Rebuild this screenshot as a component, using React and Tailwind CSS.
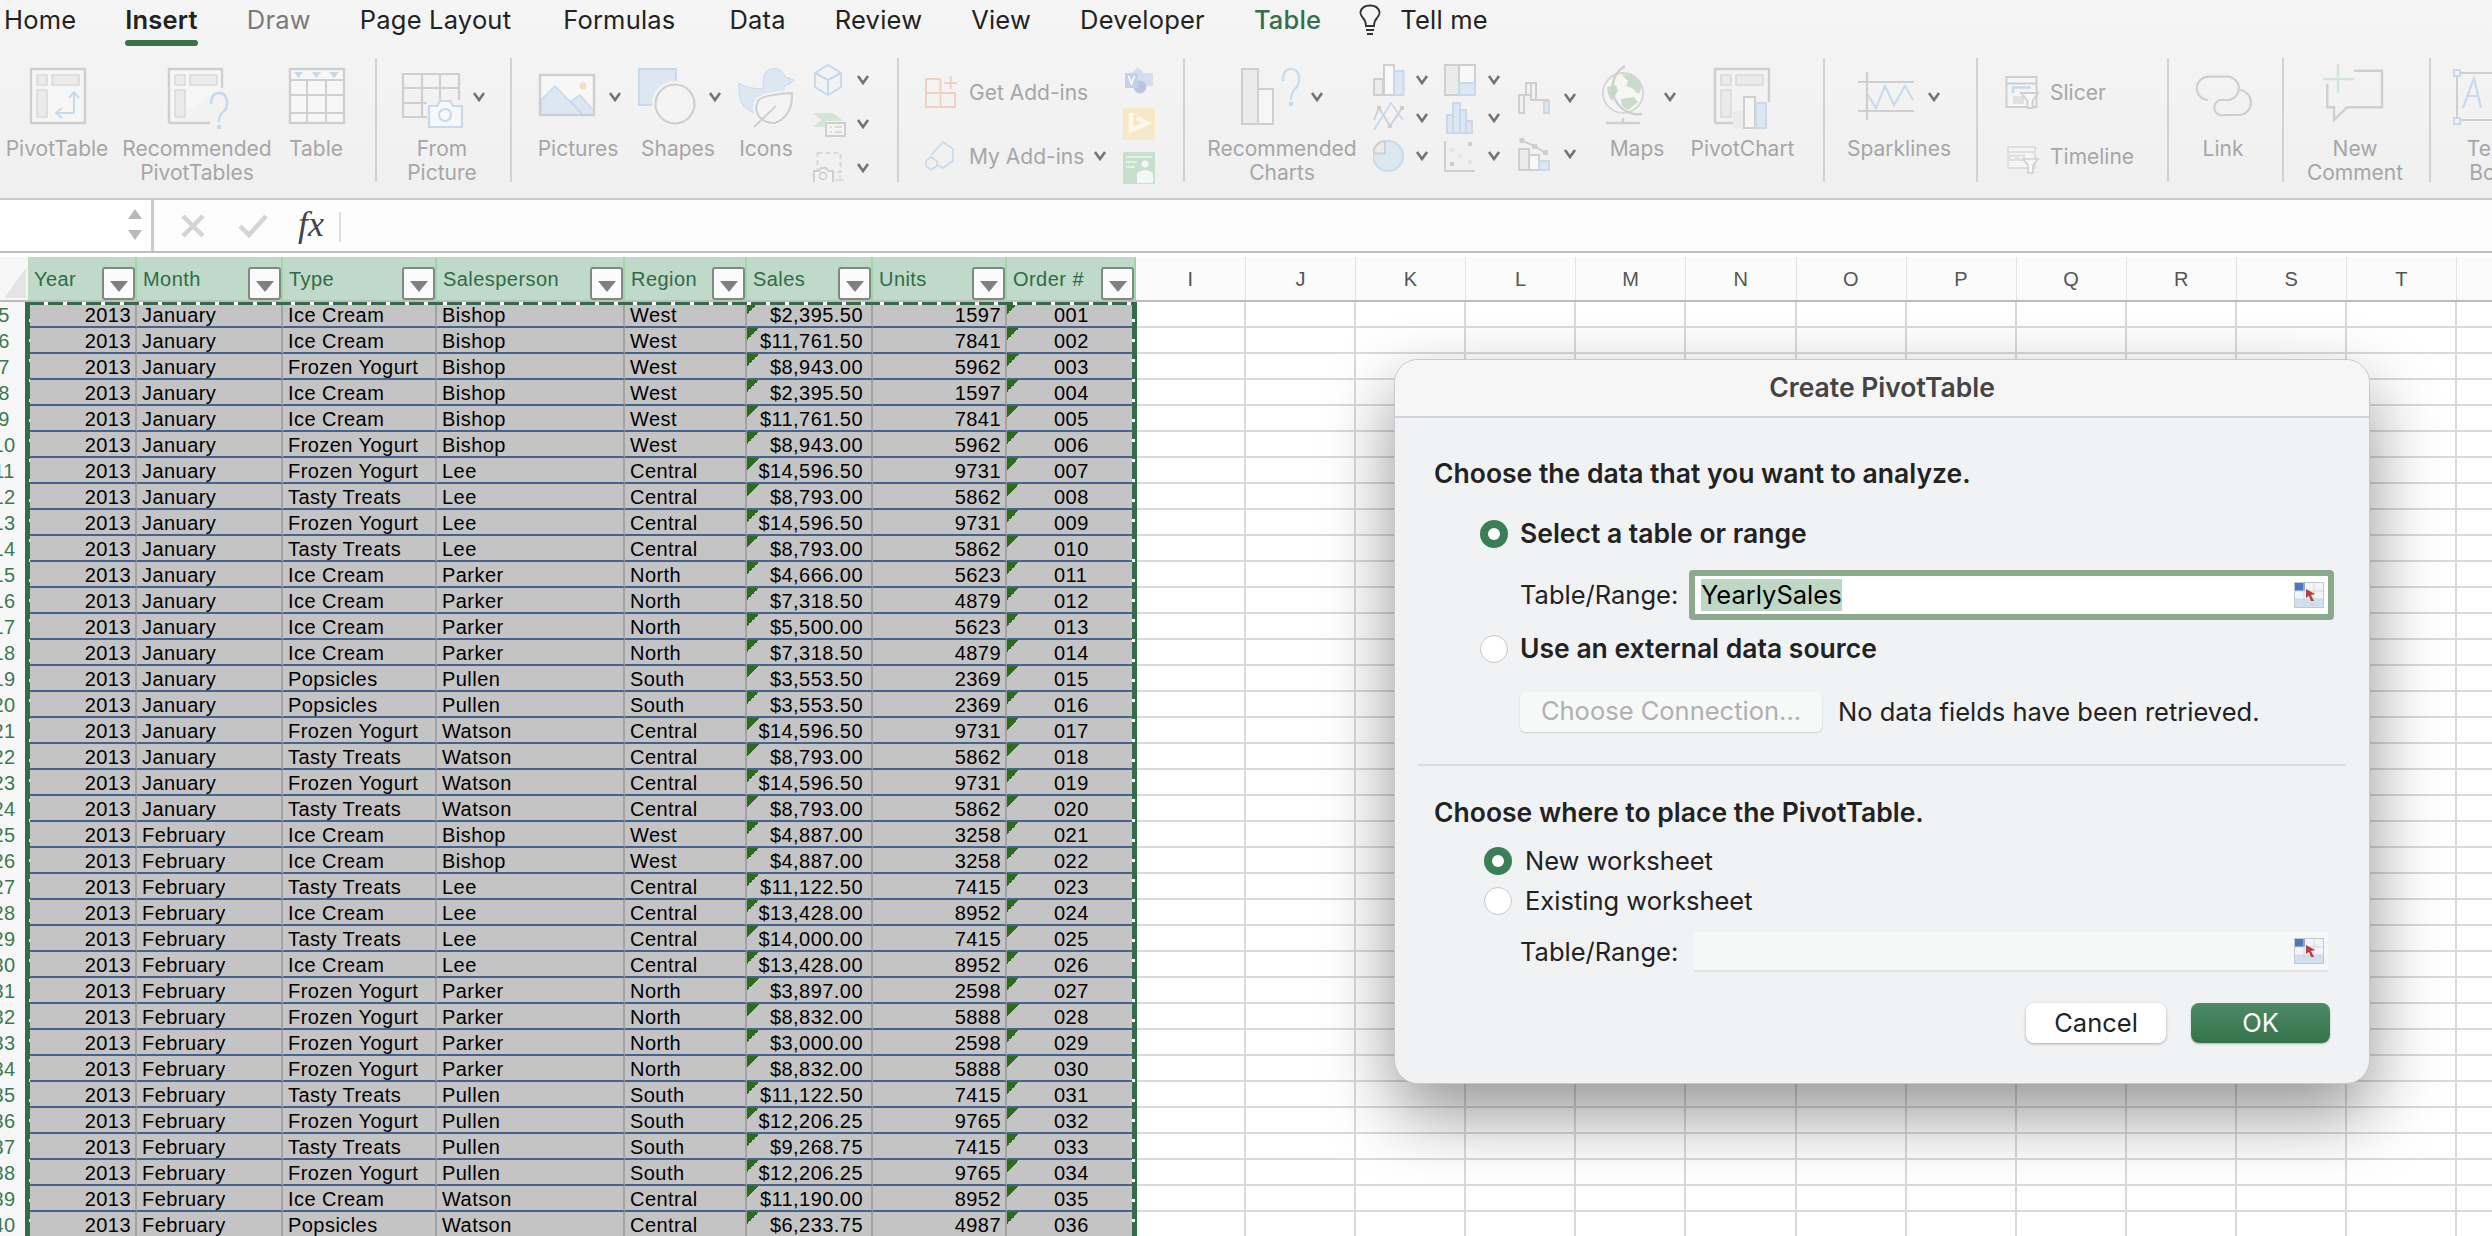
const S = '#cfcfcf';
const F = '#ebebeb';
const B = '#c8d9ec';
const BF = '#dde7f2';
const G = '#d3e6d5';

const COLS = [
  { name: 'Year', w: 'w-[109px]', cell: 'w-[112px] pr-[4px] text-right' },
  { name: 'Month', w: 'w-[146px]', cell: 'w-[146px] pl-[5px]' },
  { name: 'Type', w: 'w-[154px]', cell: 'w-[154px] pl-[5px]' },
  { name: 'Salesperson', w: 'w-[188px]', cell: 'w-[188px] pl-[5px]' },
  { name: 'Region', w: 'w-[122px]', cell: 'w-[122px] pl-[5px]' },
  { name: 'Sales', w: 'w-[126px]', cell: 'w-[126px] pr-[8px] text-right relative' },
  { name: 'Units', w: 'w-[134px]', cell: 'w-[134px] pr-[4px] text-right' },
  { name: 'Order #', w: 'w-[129px]', cell: 'w-[129px] pl-[47px] relative' },
];

// the last column starts at the window edge, its letter is out of sight
const LETTERS = ['I', 'J', 'K', 'L', 'M', 'N', 'O', 'P', 'Q', 'R', 'S', 'T', ''];

const FY = 'Frozen Yogurt';
const TT = 'Tasty Treats';
const IC = 'Ice Cream';
const PS = 'Popsicles';

const ROWS = [
  ['January', IC, 'Bishop', 'West', '$2,395.50', 1597],
  ['January', IC, 'Bishop', 'West', '$11,761.50', 7841],
  ['January', FY, 'Bishop', 'West', '$8,943.00', 5962],
  ['January', IC, 'Bishop', 'West', '$2,395.50', 1597],
  ['January', IC, 'Bishop', 'West', '$11,761.50', 7841],
  ['January', FY, 'Bishop', 'West', '$8,943.00', 5962],
  ['January', FY, 'Lee', 'Central', '$14,596.50', 9731],
  ['January', TT, 'Lee', 'Central', '$8,793.00', 5862],
  ['January', FY, 'Lee', 'Central', '$14,596.50', 9731],
  ['January', TT, 'Lee', 'Central', '$8,793.00', 5862],
  ['January', IC, 'Parker', 'North', '$4,666.00', 5623],
  ['January', IC, 'Parker', 'North', '$7,318.50', 4879],
  ['January', IC, 'Parker', 'North', '$5,500.00', 5623],
  ['January', IC, 'Parker', 'North', '$7,318.50', 4879],
  ['January', PS, 'Pullen', 'South', '$3,553.50', 2369],
  ['January', PS, 'Pullen', 'South', '$3,553.50', 2369],
  ['January', FY, 'Watson', 'Central', '$14,596.50', 9731],
  ['January', TT, 'Watson', 'Central', '$8,793.00', 5862],
  ['January', FY, 'Watson', 'Central', '$14,596.50', 9731],
  ['January', TT, 'Watson', 'Central', '$8,793.00', 5862],
  ['February', IC, 'Bishop', 'West', '$4,887.00', 3258],
  ['February', IC, 'Bishop', 'West', '$4,887.00', 3258],
  ['February', TT, 'Lee', 'Central', '$11,122.50', 7415],
  ['February', IC, 'Lee', 'Central', '$13,428.00', 8952],
  ['February', TT, 'Lee', 'Central', '$14,000.00', 7415],
  ['February', IC, 'Lee', 'Central', '$13,428.00', 8952],
  ['February', FY, 'Parker', 'North', '$3,897.00', 2598],
  ['February', FY, 'Parker', 'North', '$8,832.00', 5888],
  ['February', FY, 'Parker', 'North', '$3,000.00', 2598],
  ['February', FY, 'Parker', 'North', '$8,832.00', 5888],
  ['February', TT, 'Pullen', 'South', '$11,122.50', 7415],
  ['February', FY, 'Pullen', 'South', '$12,206.25', 9765],
  ['February', TT, 'Pullen', 'South', '$9,268.75', 7415],
  ['February', FY, 'Pullen', 'South', '$12,206.25', 9765],
  ['February', IC, 'Watson', 'Central', '$11,190.00', 8952],
  ['February', PS, 'Watson', 'Central', '$6,233.75', 4987],
];

function Chev({ x, y }) {
  return <path d={`M${x - 5} ${y - 4}L${x} ${y + 3}L${x + 5} ${y - 4}`} fill="none" stroke="#747474" strokeWidth="2.6" />;
}

function Big({ w, ml, label, second, children }) {
  return (
    <div className={`flex flex-col items-center shrink-0 ${w} ${ml || ''}`}>
      <svg className="w-full h-[79px] overflow-visible">{children}</svg>
      <div className="whitespace-nowrap leading-[24px] text-[21px] text-center text-[#a6a6a6] font-['Inter',sans-serif]">
        <div>{label}</div>
        {second && <div>{second}</div>}
      </div>
    </div>
  );
}

function Sep() {
  return <div className="w-[2px] h-[124px] shrink-0 bg-[#d2d2d2]" />;
}

function PivotRects({ dx }) {
  return (
    <g fill={F} stroke="#d9d9d9" strokeWidth="1.5">
      <rect x={dx + 7} y="17" width="10" height="10" />
      <rect x={dx + 22} y="17" width="27" height="10" />
      <rect x={dx + 7} y="32" width="10" height="27" />
    </g>
  );
}

function SmallLabel({ children }) {
  return <span className="text-[21px] text-[#a6a6a6] whitespace-nowrap font-['Inter',sans-serif]">{children}</span>;
}

function ChartIcons() {
  return (
    <svg className="w-[225px] h-[124px] shrink-0">
      <rect x="1" y="21" width="9" height="16" fill={F} stroke={S} strokeWidth="2" />
      <rect x="11" y="7" width="10" height="30" fill="#f8f8f8" stroke={S} strokeWidth="2" />
      <rect x="21" y="13" width="9.500" height="24" fill={BF} stroke={B} strokeWidth="2" />
      <Chev x={49} y={22} />
      <path d="M1 62L6 50L17 68L29 50" fill="none" stroke={S} strokeWidth="1.800" />
      <path d="M1 72L18 45L30 62" fill="none" stroke={B} strokeWidth="1.800" />
      <g fill={S}>
        <rect x="4" y="48" width="4" height="4" />
        <rect x="15" y="66" width="4" height="4" />
        <rect x="27" y="48" width="4" height="4" />
      </g>
      <Chev x={49} y={60} />
      <circle cx="15" cy="98" r="15" fill={BF} stroke={B} strokeWidth="2" />
      <path d="M12 95.500V83A13 13 0 0 0 0 95.500Z" fill={F} stroke={S} strokeWidth="2" />
      <Chev x={49} y={98} />
      <rect x="72" y="7" width="30" height="30" fill="#f8f8f8" stroke={S} strokeWidth="2" />
      <rect x="73" y="8" width="13" height="28" fill={F} />
      <path d="M86 7V37" stroke={S} strokeWidth="2" />
      <rect x="86" y="25" width="16" height="12" fill={BF} stroke={B} strokeWidth="2" />
      <Chev x={121} y={22} />
      <path d="M74 75V57H80V75ZM80 75V45H87V75ZM87 75V52H93V75ZM93 75V63H99V75Z" fill={BF} stroke={B} strokeWidth="2" />
      <Chev x={121} y={60} />
      <path d="M72 83V113H102" fill="none" stroke={S} strokeWidth="2" />
      <g fill={BF}>
        <rect x="77" y="90" width="4" height="4" />
        <rect x="85" y="96" width="4" height="4" />
        <rect x="95" y="102" width="4" height="4" />
      </g>
      <rect x="77" y="104" width="4" height="4" fill="#cdcdcd" />
      <rect x="95" y="84" width="4" height="4" fill="#cdcdcd" />
      <Chev x={121} y={98} />
      <path d="M146 37H151V55H146ZM153 37V25H158V37ZM158 25H163V42H158V37H153M153 37H146" fill="none" stroke={S} strokeWidth="2" />
      <path d="M171 43H176V55H171Z" fill={BF} stroke={B} strokeWidth="2" />
      <path d="M163 42H176" stroke={S} strokeWidth="2" />
      <Chev x={197} y={40} />
      <rect x="146" y="91" width="10" height="21" fill={F} stroke={S} strokeWidth="2" />
      <rect x="156" y="97" width="10" height="15" fill="#f8f8f8" stroke={S} strokeWidth="2" />
      <rect x="166" y="103" width="10" height="9" fill={BF} stroke={B} strokeWidth="2" />
      <path d="M149 83L162 88L172 95" fill="none" stroke={S} strokeWidth="2" />
      <g fill={S}>
        <rect x="146.500" y="80" width="5" height="5" />
        <rect x="159" y="86" width="5" height="5" />
        <rect x="170" y="92" width="5" height="5" />
      </g>
      <Chev x={197} y={96} />
    </svg>
  );
}

function Ribbon() {
  return (
    <div className="flex h-[140px] items-start overflow-hidden">
      <div className="w-[375px] shrink-0 flex">
        <Big w="w-[114px]" label="PivotTable">
          <rect x="31" y="11" width="54" height="54" fill="#f6f6f6" stroke={S} strokeWidth="2.4" />
          <PivotRects dx={30} />
          <path d="M74 35V55H57M69 40L74 34L79 40M62 50L56 55L62 60" fill="none" stroke={B} strokeWidth="2" />
        </Big>
        <Big w="w-[166px]" label="Recommended" second="PivotTables">
          <path d="M55 65V11H108V30M55 65H96" fill="#f6f6f6" stroke={S} strokeWidth="2.4" />
          <PivotRects dx={54} />
          <path d="M97 46q0-11 8-11q8 0 8 10q0 7-5 10q-3 3-3 9" fill="none" stroke={B} strokeWidth="2.4" />
          <rect x="103" y="67" width="4" height="4" fill={B} />
        </Big>
        <Big w="w-[72px]" label="Table">
          <rect x="10" y="11" width="54" height="54" fill="#f7f7f7" stroke={S} strokeWidth="2.4" />
          <path d="M10 22H64M10 37H64M10 55H64M27 22V65M46 22V65" stroke={S} strokeWidth="2" />
          <path d="M14 14H23L18.500 20ZM32 14H41L36.500 20ZM49 14H59L54 20Z" fill={B} />
        </Big>
      </div>
      <Sep />
      <div className="w-[133px] shrink-0 flex">
        <Big w="w-[130px]" label="From" second="Picture">
          <path d="M50 59H26V16H82V42M26 30H82M45 16V59M63 16V42M26 45H50" fill="none" stroke={S} strokeWidth="2.2" />
          <path d="M52 48H60L63 43H73L76 48H85V69H52Z" fill="#f7f8fa" stroke={B} strokeWidth="2.2" />
          <circle cx="68" cy="57" r="6" fill="none" stroke={B} strokeWidth="2.2" />
          <Chev x={102} y={39} />
        </Big>
      </div>
      <Sep />
      <div className="w-[385px] shrink-0 flex">
        <Big w="w-[80px]" ml="ml-[26px]" label="Pictures">
          <rect x="2" y="17" width="54" height="40" fill="#f7f7f7" />
          <path d="M3 42L17 28L45 57H3ZM33 43L42 37L56 53V57H45Z" fill={BF} stroke={B} strokeWidth="1.500" />
          <rect x="2" y="17" width="54" height="40" fill="none" stroke={S} strokeWidth="2.4" />
          <circle cx="45" cy="28" r="3.500" fill="#f6dcc0" />
          <Chev x={77} y={39} />
        </Big>
        <Big w="w-[120px]" label="Shapes">
          <rect x="21" y="11" width="37" height="36" fill={BF} stroke={B} strokeWidth="2" />
          <circle cx="57" cy="46" r="23" fill="#f4f4f4" />
          <circle cx="57" cy="46" r="19.500" fill="#f4f4f4" stroke={S} strokeWidth="2.2" />
          <Chev x={97} y={39} />
        </Big>
        <Big w="w-[56px]" label="Icons">
          <path d="M1 25Q10 31 25 31Q26 27 25 22Q26 11 36 10.500Q45 11 47 19L56 22Q53 27 46 28L46 34L20 56Q2 52 1 35Z" fill={BF} stroke={B} strokeWidth="1" />
          <path d="M20 43Q23 37 54 35Q55 58 37 65Q20 65 18 50Z" fill="#f4f4f4" stroke="#f4f4f4" strokeWidth="6" />
          <path d="M20 43Q23 37 54 35Q55 58 37 65Q20 65 18 50Z" fill="#f4f4f4" stroke={S} strokeWidth="2" />
          <path d="M16 69L38 48" fill="none" stroke={S} strokeWidth="2" />
        </Big>
        <svg className="w-[80px] h-[124px] shrink-0">
          <path d="M34 7L47 15V29L34 37L21 29V15ZM21 15L34 22L47 15M34 22V37" fill="none" stroke={B} strokeWidth="2" />
          <Chev x={69} y={22} />
          <path d="M19 55H39L49 63H32V69H19L27 62Z" fill={G} />
          <rect x="32" y="65" width="19" height="13" fill="#f4f4f4" stroke={S} strokeWidth="2" />
          <path d="M36 69H38M41 69H48M36 74H38M41 74H48" stroke={S} strokeWidth="1.500" />
          <Chev x={69} y={66} />
          <rect x="23.500" y="95" width="23" height="19" fill="none" stroke="#d8d8d8" strokeWidth="2" strokeDasharray="5 3" />
          <path d="M20 113H25L27 110H32L34 113H39V125H20Z" fill="#f4f4f4" stroke={S} strokeWidth="2" />
          <circle cx="29" cy="118" r="3.500" fill="none" stroke={S} strokeWidth="1.800" />
          <path d="M46 117V126M41 122H50" stroke={G} strokeWidth="2" />
          <Chev x={69} y={110} />
        </svg>
      </div>
      <Sep />
      <div className="w-[284px] shrink-0 flex">
        <div className="w-[224px] shrink-0 pl-[26px]">
          <div className="h-[70px] flex items-center">
            <svg className="w-[44px] h-[34px] shrink-0">
              <path d="M15.500 3H1V31H30V17H1M15.500 3V31" fill="none" stroke="#f1cfc2" strokeWidth="2" />
              <path d="M19 7H32M25.700 0V13" stroke="#f1cfc2" strokeWidth="2" />
            </svg>
            <SmallLabel>Get Add-ins</SmallLabel>
          </div>
          <div className="h-[58px] flex items-center">
            <svg className="w-[44px] h-[32px] shrink-0">
              <path d="M6 14L18 1L28 8V20L18 27L12 24" fill="none" stroke={B} strokeWidth="1.600" />
              <path d="M6 16L12 20V25L6 29L1 25V20Z" fill="none" stroke={B} strokeWidth="1.600" />
            </svg>
            <SmallLabel>My Add-ins</SmallLabel>
            <svg className="w-[26px] h-[14px] shrink-0 ml-[4px]"><Chev x={12} y={6} /></svg>
          </div>
        </div>
        <svg className="w-[34px] h-[128px] shrink-0">
          <path d="M9 15L15 9L21 15H30V28H2V15Z" fill="#d5deef" />
          <circle cx="17" cy="29" r="6.500" fill="#bcc5e0" />
          <rect x="2" y="15" width="13" height="15" fill="#c5d0ea" />
          <path d="M5.500 18L8.500 26L11.500 18" fill="none" stroke="#fff" strokeWidth="1.600" />
          <rect x="0" y="50" width="32" height="32" fill="#f7e8c7" />
          <path d="M8 55V72L24 65L14 60" fill="none" stroke="#fdf8ec" strokeWidth="4.500" />
          <rect x="0" y="94" width="32" height="32" fill="#c7dfcf" />
          <path d="M3 99H29M3 104H14M3 109H12" stroke="#e4f0e7" strokeWidth="2" />
          <circle cx="22" cy="106" r="3.500" fill="#f4f8f5" />
          <path d="M14 125V115Q22 109 30 115V125Z" fill="#f4f8f5" />
        </svg>
      </div>
      <Sep />
      <div className="w-[638px] shrink-0 flex">
        <Big w="w-[182px]" ml="ml-[6px]" label="Recommended" second="Charts">
          <rect x="51" y="11" width="16" height="55" fill={F} stroke={S} strokeWidth="2" />
          <rect x="67" y="31" width="15" height="35" fill="#f6f6f6" stroke={S} strokeWidth="2" />
          <path d="M92 23q0-12 8-12q8 0 8 10q0 7-5 11q-3 3-3 10" fill="none" stroke={B} strokeWidth="2.2" />
          <rect x="98" y="44" width="4" height="4" fill={B} />
          <Chev x={126} y={39} />
        </Big>
        <ChartIcons />
        <Big w="w-[78px]" label="Maps">
          <circle cx="25" cy="35" r="20" fill="#f5f7f5" stroke="#d6d6d6" strokeWidth="2" />
          <path d="M24 17Q34 14 42 24Q45 32 40 36L34 30L28 28L30 23ZM9 29L18 27L20 33L14 43Q9 38 9 29ZM23 41L36 39L40 44L30 52L24 48Z" fill="#c9dccb" />
          <path d="M27 8A26 26 0 0 0 44 56" fill="none" stroke={S} strokeWidth="2.400" />
          <path d="M25 60V65M8 65H42" stroke={S} strokeWidth="2.400" />
          <Chev x={72} y={39} />
        </Big>
        <Big w="w-[133px]" label="PivotChart">
          <path d="M39 65V11H93V44M39 65H57" fill="none" stroke={S} strokeWidth="2.4" />
          <PivotRects dx={38} />
          <rect x="57" y="53" width="11" height="17" fill={F} />
          <rect x="68" y="39" width="11" height="31" fill="#f6f6f6" stroke={S} strokeWidth="2" />
          <rect x="80" y="45" width="10" height="25" fill={BF} stroke={B} strokeWidth="2" />
        </Big>
      </div>
      <Sep />
      <div className="w-[151px] shrink-0 flex">
        <Big w="w-[148px]" label="Sparklines">
          <path d="M33 24H89M33 53H89M42 14V62" fill="none" stroke={S} strokeWidth="2.2" />
          <path d="M43 37L51 50L60 28L69 47L80 28L88 42" fill="none" stroke={B} strokeWidth="2" />
          <Chev x={109} y={39} />
        </Big>
      </div>
      <Sep />
      <div className="w-[189px] shrink-0 pl-[27px]">
        <div className="h-[70px] flex items-center">
          <svg className="w-[45px] h-[34px] shrink-0">
            <rect x="1.500" y="1" width="30" height="30" fill="#f5f5f5" stroke={S} strokeWidth="2" />
            <path d="M1.500 7.500H31.500" stroke={S} strokeWidth="2" />
            <path d="M8 17V11.500H26" fill="none" stroke={B} strokeWidth="2.500" />
            <rect x="8" y="20" width="11" height="8" fill="#e2e2e2" />
            <path d="M16 17H33L27.500 25V32H22.500V25Z" fill="#f7f7f7" stroke={S} strokeWidth="1.800" />
          </svg>
          <SmallLabel>Slicer</SmallLabel>
        </div>
        <div className="h-[58px] flex items-center">
          <svg className="w-[45px] h-[34px] shrink-0 ml-[2px] -mr-[2px]">
            <rect x="1" y="7" width="27" height="21" fill="#f5f5f5" stroke="#dadada" strokeWidth="1.600" />
            <path d="M1 12H28" stroke="#dadada" strokeWidth="1.600" />
            <path d="M3 15.500H9V20H3ZM11 15.500H17V20H11Z" fill="none" stroke="#dadada" strokeWidth="1.400" />
            <path d="M16 19H31L26 25V33H21V25Z" fill="#f7f7f7" stroke={S} strokeWidth="1.600" />
          </svg>
          <SmallLabel>Timeline</SmallLabel>
        </div>
      </div>
      <Sep />
      <div className="w-[113px] shrink-0 flex">
        <Big w="w-[108px]" label="Link">
          <g transform="translate(-181 2) scale(0.3333)">
            <path d="M660 120A35 35 0 0 1 663 50H715A35 35 0 0 1 720 120H695A22 22 0 0 0 710 165H757A38 38 0 0 0 757 90" fill="none" stroke={S} strokeWidth="6.500" />
          </g>
        </Big>
      </div>
      <Sep />
      <div className="w-[145px] shrink-0 flex">
        <Big w="w-[142px]" label="New" second="Comment">
          <path d="M70 12.700H98V49.300H63L50 62V49.300H43.300V26" fill="none" stroke={S} strokeWidth="2.4" />
          <path d="M54 6V35M39 21H70" stroke={G} strokeWidth="2.4" />
        </Big>
      </div>
      <Sep />
      <div className="w-[114px] shrink-0 flex">
        <Big w="w-[114px]" label="Text" second="Box">
          <path d="M26 15H110M26 15V62H110" fill="none" stroke={S} strokeWidth="2" />
          <rect x="23" y="12" width="6" height="6" fill="#f4f4f4" stroke={B} strokeWidth="2" />
          <rect x="23" y="60" width="6" height="6" fill="#f4f4f4" stroke={B} strokeWidth="2" />
          <path d="M32 50L43 20L50 50M36 38H47" fill="none" stroke={B} strokeWidth="2.2" />
        </Big>
      </div>
    </div>
  );
}

function Tabs() {
  const tab = "leading-[40px] text-[25.5px] whitespace-nowrap";
  return (
    <div className="flex h-[58px] pl-[4px] gap-[49px] font-['Inter',sans-serif] text-[#222222] tracking-[0.2px]">
      <div className={tab}>Home</div>
      <div className="flex flex-col">
        <div className={`${tab} font-semibold`}>Insert</div>
        <div className="h-[6px] rounded-[3px] bg-[#3a7148]" />
      </div>
      <div className={`${tab} text-[#7a7a7a]`}>Draw</div>
      <div className={tab}>Page Layout</div>
      <div className={`${tab} ml-[3px]`}>Formulas</div>
      <div className={`${tab} ml-[5px]`}>Data</div>
      <div className={tab}>Review</div>
      <div className={tab}>View</div>
      <div className={tab}>Developer</div>
      <div className={`${tab} text-[#33704a] font-medium`}>Table</div>
      <div className="flex items-center h-[40px] -ml-[12px] gap-[18px]">
        <svg width="24" height="32" viewBox="0 0 24 32" fill="none" stroke="#333" strokeWidth="1.8">
          <path d="M8 22Q8 17 5 14Q2 10 2.500 8Q4 1.500 12 1.500Q20 1.500 21.500 8Q22 10 19 14Q16 17 16 22Z" />
          <path d="M8 26H16M9 30H15" />
        </svg>
        <div className={tab}>Tell me</div>
      </div>
    </div>
  );
}

function FormulaBar() {
  return (
    <div className="flex h-[53px] bg-[#fdfdfd] border-b-2 border-[#bfbfbf]">
      <div className="w-[151px] h-[50px] bg-white flex items-center justify-end pr-[8px] shrink-0">
        <svg width="16" height="34" viewBox="0 0 16 34" fill="#b9b9b9">
          <path d="M8 1L15 11H1ZM1 22H15L8 32Z" />
        </svg>
      </div>
      <div className="w-[3px] bg-[#cccccc] shrink-0" />
      <div className="flex items-center pl-[27px] gap-[33px]">
        <svg width="24" height="24" viewBox="0 0 24 24" stroke="#d4d4d4" strokeWidth="4.500" fill="none">
          <path d="M2 2L22 22M22 2L2 22" />
        </svg>
        <svg width="30" height="24" viewBox="0 0 30 24" stroke="#d4d4d4" strokeWidth="4.500" fill="none">
          <path d="M2 12L11 21L28 2" />
        </svg>
        <span className="text-[36px] leading-none italic text-[#444444] font-['Liberation_Serif',serif] -ml-[3px] -mt-[3px]">fx</span>
      </div>
      <div className="w-[2px] h-[30px] mt-[12px] ml-[15px] bg-[#dddddd]" />
    </div>
  );
}

function FilterBtn() {
  return (
    <div className="w-[33px] h-[33px] shrink-0 rounded-[3px] border-2 border-[#7f8a83] bg-[#fbfbfb] flex items-center justify-center">
      <svg width="18" height="12" viewBox="0 0 18 12" className="mt-[4px]"><path d="M0 1H18L9 12Z" fill="#808080" /></svg>
    </div>
  );
}

function HeaderRow() {
  return (
    <div className="flex h-[49px] pt-[4px] border-b-2 border-[#bcbcbc]">
      <div className="w-[28px] shrink-0 bg-[#f7f7f7] flex items-end justify-end pr-[2px] pb-[2px]">
        <svg width="22" height="30"><path d="M22 0V30H0Z" fill="#e4e4e4" /></svg>
      </div>
      {COLS.map(c => (
        <div key={c.name} className={`${c.w} shrink-0 bg-[#bfdac8] border-r-2 border-[#9fd6a9] flex items-end justify-between pl-[6px]`}>
          <span className="self-center text-[#2f6b47] whitespace-nowrap">{c.name}</span>
          <FilterBtn />
        </div>
      ))}
      {LETTERS.map((l, i) => (
        <div key={i} className="w-[110.100px] shrink-0 bg-[#fbfbfb] border-r border-[#e4e4e4] text-center text-[#555555] leading-[44px]">{l}</div>
      ))}
    </div>
  );
}

function Triangle() {
  return <div className="absolute left-0 top-0 w-[12px] h-[12px] bg-[linear-gradient(135deg,#2c6a1c_50%,transparent_50%)]" />;
}

function DataRow({ n, row }) {
  const order = String(n - 4).padStart(3, '0');
  const values = [2013, row[0], row[1], row[2], row[3], row[4], row[5], order];
  return (
    <div className="flex h-[26px] leading-[26px]">
      <div className="w-[25px] shrink-0 overflow-hidden bg-[#f7f7f7] text-[#3a7a50]">
        <div className="w-[40px] -ml-[16px] text-center">{n}</div>
      </div>
      {COLS.map((c, i) => (
        <div key={c.name} className={`${c.cell} shrink-0 bg-[#c4c4c4] border-r-2 border-b-2 border-r-[#a2a2a2] border-b-[#46638f] whitespace-nowrap text-black`}>
          {(i === 5 || i === 7) && <Triangle />}
          {values[i]}
        </div>
      ))}
      {LETTERS.map((l, i) => (
        <div key={i} className="w-[110.100px] shrink-0 bg-white border-r-2 border-b-2 border-[#dadada]" />
      ))}
    </div>
  );
}

function Sheet() {
  return (
    <div className="relative font-['Liberation_Sans',sans-serif] text-[20px] tracking-[0.45px]">
      <HeaderRow />
      {ROWS.map((row, i) => <DataRow key={i} n={i + 5} row={row} />)}
      {/* marching ants round the copied range */}
      <div className="absolute left-[25px] top-[49px] bottom-0 w-[5px] bg-[#356b4a] bg-[repeating-linear-gradient(180deg,#356b4a_0_17px,#ffffff_17px_20px)] bg-[length:1.500px_100%] bg-right bg-no-repeat" />
      <div className="absolute left-[29px] top-[49px] w-[1106px] h-[3px] bg-[repeating-linear-gradient(90deg,#356b4a_0_15px,#ffffff_15px_19px)]" />
      <div className="absolute left-[1132px] top-[49px] bottom-0 w-[5px] bg-[#356b4a] bg-[repeating-linear-gradient(180deg,#356b4a_0_17px,#ffffff_17px_20px)] bg-[length:3px_100%] bg-left bg-no-repeat" />
    </div>
  );
}

function RadioDot({ on }) {
  return on ? (
    <div className="w-[28px] h-[28px] shrink-0 rounded-full bg-[#3b7f57] flex items-center justify-center">
      <div className="w-[12px] h-[12px] rounded-full bg-white" />
    </div>
  ) : (
    <div className="w-[28px] h-[28px] shrink-0 rounded-full bg-white border border-[#c8c8c8]" />
  );
}

function RangePicker() {
  return (
    <svg width="30" height="26" viewBox="0 0 30 26" className="shrink-0">
      <rect x="0.500" y="0.500" width="29" height="25" fill="#f2f4f7" stroke="#c4c8cc" />
      <rect x="1" y="1" width="10" height="8" fill="#4a79c4" />
      <rect x="1" y="17" width="28" height="8" fill="#cfe0f0" />
      <path d="M10 1V25M20 1V25M1 9H29M1 17H29" stroke="#d4d8dc" strokeWidth="1" />
      <path d="M12 7L21 12L17 13L20 19L17 19L15 14L12 16Z" fill="#b3403f" />
    </svg>
  );
}

function Dialog() {
  const strong = 'text-[26.5px] font-semibold';
  return (
    <div className="absolute left-[1394px] top-[359px] w-[976px] h-[725px] rounded-[24px] bg-[#f1f2f4] border border-[#c9c9c9] shadow-[0_30px_70px_rgba(0,0,0,0.42)] overflow-hidden font-['Inter',sans-serif] text-[#222222] text-[25.5px]">
      <div className={`h-[58px] bg-[#f6f6f7] border-b-2 border-[#d2d3d6] flex items-center justify-center text-[#444444] ${strong}`}>Create PivotTable</div>
      <div className="pl-[39px] pt-[40px]">
        <div className={`h-[30px] leading-[30px] ${strong}`}>Choose the data that you want to analyze.</div>
        <div className={`flex items-center h-[28px] mt-[32px] ml-[46px] gap-[12px] ${strong}`}>
          <RadioDot on />
          <span>Select a table or range</span>
        </div>
        <div className="flex items-center mt-[22px] ml-[86px]">
          <span className="w-[169px] shrink-0">Table/Range:</span>
          <div className="w-[645px] h-[50px] rounded-[4px] border-[6px] border-[#8aa98d] bg-white flex items-center justify-between pl-[6px] pr-[4px]">
            <span className="bg-[#bfd8c6] leading-[32px] text-black">YearlySales</span>
            <RangePicker />
          </div>
        </div>
        <div className={`flex items-center h-[28px] mt-[15px] ml-[46px] gap-[12px] ${strong}`}>
          <RadioDot />
          <span>Use an external data source</span>
        </div>
        <div className="flex items-center mt-[29px] ml-[86px]">
          <div className="w-[302px] h-[40px] rounded-[6px] bg-[#f7f8f8] shadow-[0_1px_2px_rgba(0,0,0,0.15)] text-[#b0b0b0] text-center leading-[38px]">Choose Connection...</div>
          <span className="ml-[16px]">No data fields have been retrieved.</span>
        </div>
        <div className="w-[928px] h-[2px] -ml-[16px] mt-[32px] bg-[#dcdde0]" />
        <div className={`h-[30px] leading-[30px] mt-[31px] ${strong}`}>Choose where to place the PivotTable.</div>
        <div className="flex items-center h-[28px] mt-[20px] ml-[50px] gap-[13px]">
          <RadioDot on />
          <span>New worksheet</span>
        </div>
        <div className="flex items-center h-[28px] mt-[12px] ml-[50px] gap-[13px]">
          <RadioDot />
          <span>Existing worksheet</span>
        </div>
        <div className="flex items-center mt-[17px] ml-[86px]">
          <span className="w-[174px] shrink-0">Table/Range:</span>
          <div className="w-[634px] h-[40px] bg-[#f6f7f7] border-b-2 border-[#e2e3e3] flex items-center justify-end pr-[4px]">
            <RangePicker />
          </div>
        </div>
        <div className="flex justify-end gap-[25px] mt-[31px] pr-[39px]">
          <div className="w-[140px] h-[40px] rounded-[8px] bg-white shadow-[0_1px_3px_rgba(0,0,0,0.3)] text-center leading-[40px]">Cancel</div>
          <div className="w-[139px] h-[40px] rounded-[8px] bg-[linear-gradient(180deg,#4f8a66,#33734a)] shadow-[0_1px_2px_rgba(0,0,0,0.25)] text-white text-center leading-[40px]">OK</div>
        </div>
      </div>
    </div>
  );
}

export default function App() {
  return (
    <div className="relative w-[2492px] h-[1236px] overflow-hidden bg-white">
      <div className="h-[200px] bg-[linear-gradient(180deg,#f5f5f5,#f0f0f0)] border-b-2 border-[#c9c9c9]">
        <Tabs />
        <Ribbon />
      </div>
      <FormulaBar />
      <Sheet />
      <Dialog />
    </div>
  );
}
